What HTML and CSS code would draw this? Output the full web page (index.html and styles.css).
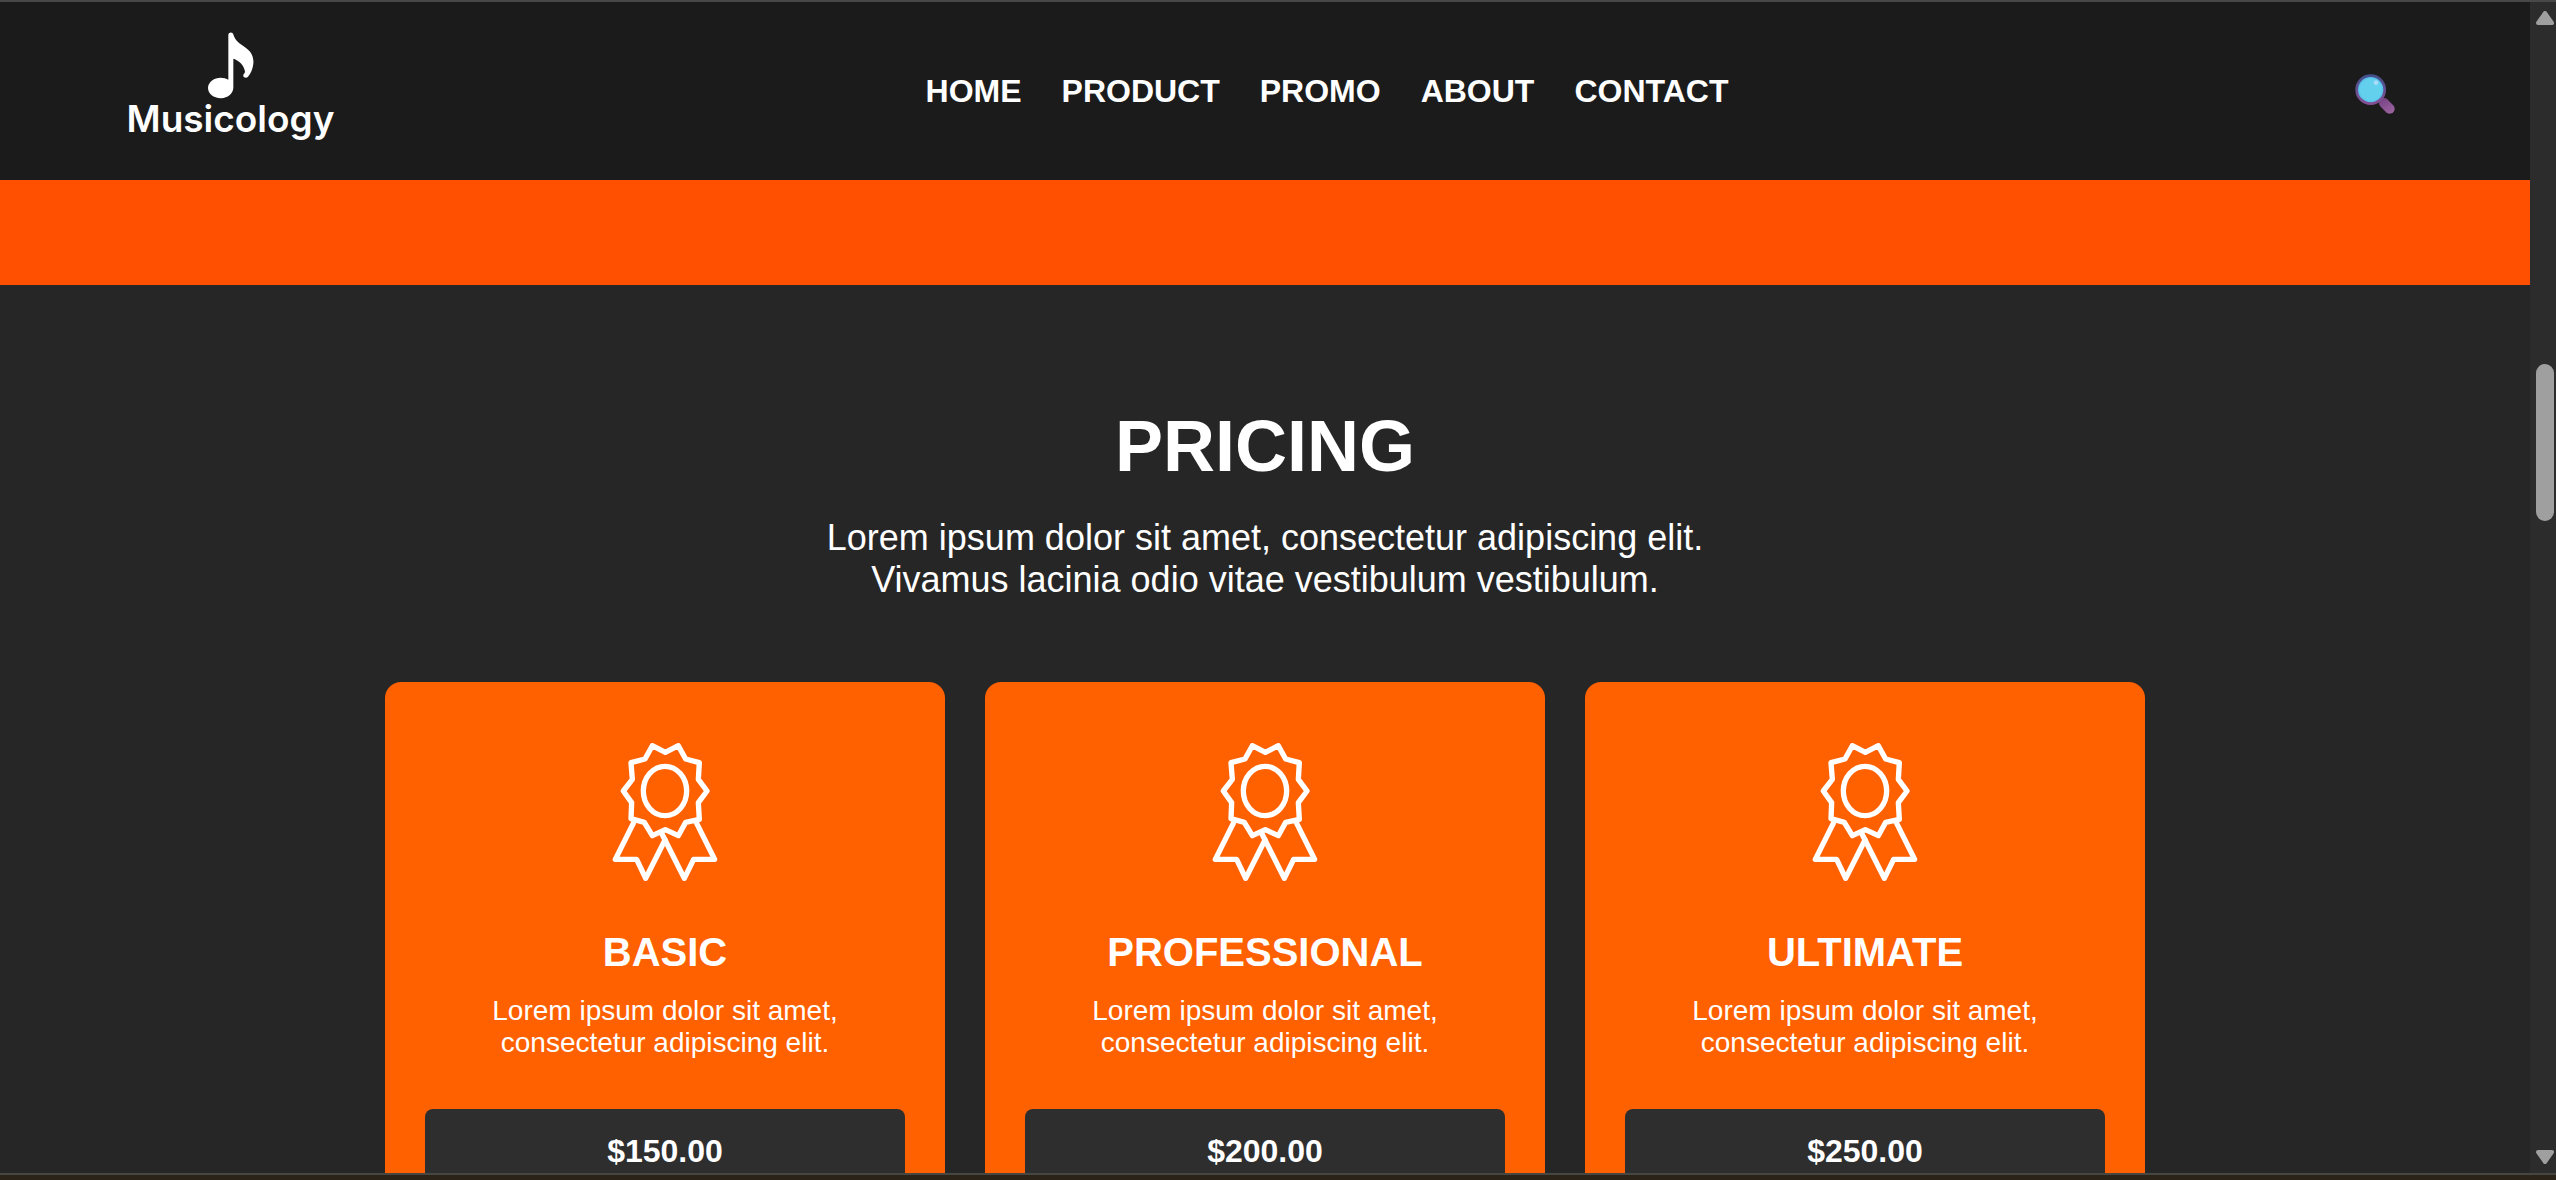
FILE: index.html
```html
<!DOCTYPE html>
<html lang="en">
<head>
<meta charset="utf-8">
<meta name="viewport" content="width=device-width, initial-scale=1">
<title>Musicology</title>
<link rel="stylesheet" href="styles.css">
</head>
<body>
<svg class="defs" aria-hidden="true">
  <symbol id="award" viewBox="-15 6 480 480">
    <g fill="none" stroke="#fff" stroke-width="16" stroke-linejoin="round" stroke-linecap="round">
      <path d="M187 77L226 97L265 77L287 117L328 128L325 178L351 213L325 248L328 298L287 307L265 347L226 329L187 347L163 307L123 296L125 248L100 213L127 178L123 128L165 117Z"/>
      <ellipse cx="225" cy="213" rx="65" ry="74"/>
      <path d="M131 308L76 418H140L167 475L225 360"/>
      <path d="M216 342L283 475L311 418H374L319 308"/>
    </g>
  </symbol>
</svg>
<div class="frame">
  <div class="page">
    <header class="header">
      <a class="logo" href="#">
        <svg class="logo-note" viewBox="323 95 138 200" aria-hidden="true">
          <path fill="#fff" d="M384 103C384 94 398 93 399 102C404 120 418 129 434 140C452 152 461 168 459 190C457 207 451 220 443 229C437 235 427 230 429 223C431 219 434 218 434 213C431 195 417 181 399 175V262C398 281 380 294 361 293C340 293 323 280 323 262C324 244 342 232 361 232C370 232 378 234 384 238Z"/>
        </svg>
        <span class="logo-name">Musicology</span>
      </a>
      <nav class="nav">
        <a href="#">HOME</a>
        <a href="#">PRODUCT</a>
        <a href="#">PROMO</a>
        <a href="#">ABOUT</a>
        <a href="#">CONTACT</a>
      </nav>
      <button class="search" type="button" aria-label="Search">
        <svg viewBox="108 72 120 120" aria-hidden="true">
          <defs>
            <linearGradient id="rim" x1="0" y1="0" x2="0" y2="1"><stop offset="0" stop-color="#43508c"/><stop offset="1" stop-color="#854f93"/></linearGradient>
            <radialGradient id="glass"><stop offset=".75" stop-color="#63d0ee"/><stop offset="1" stop-color="#4fb0e4"/></radialGradient>
            <linearGradient id="grip" gradientUnits="userSpaceOnUse" x1="190" y1="150" x2="215" y2="190"><stop offset="0" stop-color="#7a4587"/><stop offset="1" stop-color="#9b639f"/></linearGradient>
          </defs>
          <path d="M195 159L212 176" stroke="url(#grip)" stroke-width="30" stroke-linecap="round"/>
          <circle cx="155" cy="119" r="42" fill="url(#glass)" stroke="url(#rim)" stroke-width="8"/>
          <ellipse cx="171" cy="98" rx="7" ry="7" fill="#a9dcf8"/>
        </svg>
      </button>
    </header>
    <div class="band"></div>
    <main class="pricing">
      <h1>PRICING</h1>
      <p class="intro">Lorem ipsum dolor sit amet, consectetur adipiscing elit.<br>Vivamus lacinia odio vitae vestibulum vestibulum.</p>
      <div class="plans">
        <article class="plan">
          <svg class="plan-icon" aria-hidden="true"><use href="#award"/></svg>
          <h2>BASIC</h2>
          <p>Lorem ipsum dolor sit amet, consectetur adipiscing elit.</p>
          <div class="price">$150.00</div>
        </article>
        <article class="plan">
          <svg class="plan-icon" aria-hidden="true"><use href="#award"/></svg>
          <h2>PROFESSIONAL</h2>
          <p>Lorem ipsum dolor sit amet, consectetur adipiscing elit.</p>
          <div class="price">$200.00</div>
        </article>
        <article class="plan">
          <svg class="plan-icon" aria-hidden="true"><use href="#award"/></svg>
          <h2>ULTIMATE</h2>
          <p>Lorem ipsum dolor sit amet, consectetur adipiscing elit.</p>
          <div class="price">$250.00</div>
        </article>
      </div>
    </main>
  </div>
  <div class="scrollbar" aria-hidden="true">
    <svg class="arrow" viewBox="0 0 18 14"><path d="M9 2L16 12H2Z"/></svg>
    <div class="track"><div class="thumb"></div></div>
    <svg class="arrow" viewBox="0 0 18 14"><path d="M9 12L16 2H2Z"/></svg>
  </div>
</div>
</body>
</html>
```
FILE: styles.css
```css
* {
  box-sizing: border-box;
  margin: 0;
  padding: 0;
}

body {
  height: 100vh;
  padding-bottom: 5px;
  overflow: hidden;
  background: #2b2218;
  color: #fff;
  font-family: "Liberation Sans", Arial, sans-serif;
}

.defs {
  position: absolute;
  width: 0;
  height: 0;
}

.frame {
  display: flex;
  height: 100%;
  border-top: 2px solid #484848;
  border-bottom: 2px solid #484642;
  background: #262626;
}

.page {
  flex: 1;
  min-width: 0;
  overflow: hidden;
}

.header {
  display: flex;
  align-items: center;
  justify-content: space-between;
  height: 178px;
  padding: 0 5%;
  background: #1b1b1b;
}

.logo {
  display: flex;
  flex-direction: column;
  align-items: center;
  padding-bottom: 12px;
  color: #fff;
  text-decoration: none;
}

.logo-note {
  width: 46px;
  height: 67px;
}

.logo-name {
  font: 600 37px/40px Inter, sans-serif;
}

.nav {
  display: flex;
  gap: 40px;
}

.nav a {
  color: #fff;
  font-size: 32px;
  font-weight: bold;
  line-height: 36px;
  text-decoration: none;
}

.search {
  padding: 6px 8px 0 36px;
  border: 0;
  background: none;
  cursor: pointer;
}

.search svg {
  display: block;
  width: 40px;
  height: 40px;
}

.band {
  height: 105px;
  background: #ff4f00;
}

.pricing {
  padding: 120px 40px;
  text-align: center;
}

h1 {
  font-size: 72px;
  line-height: 82px;
}

.intro {
  margin: 30px 0 81px;
  font-size: 36px;
  line-height: 42px;
}

.plans {
  display: grid;
  grid-template-columns: repeat(3, 1fr);
  gap: 40px;
  max-width: 1760px;
  margin: 0 auto;
}

.plan {
  padding: 40px;
  border-radius: 16px;
  background: #ff6000;
}

.plan-icon {
  display: block;
  width: 160px;
  height: 160px;
  margin: 0 auto 47px;
}

.plan h2 {
  font-size: 40px;
  line-height: 46px;
}

.plan p {
  margin: 20px 40px 50px;
  font-size: 28px;
  line-height: 32px;
}

.price {
  padding: 24px;
  border-radius: 8px;
  background: #2e2e2e;
  font-size: 32px;
  font-weight: bold;
  line-height: 36px;
}

.scrollbar {
  display: flex;
  flex-direction: column;
  align-items: flex-end;
  width: 26px;
  padding: 9px 2px 9px 0;
  background: #2c2c2c;
}

.arrow {
  width: 18px;
  height: 14px;
  fill: #9f9f9f;
  stroke: #9f9f9f;
  stroke-width: 4px;
  stroke-linejoin: round;
}

.track {
  flex: 1;
  padding-top: 339px;
}

.thumb {
  width: 18px;
  height: 157px;
  border-radius: 9px;
  background: #9f9f9f;
}
```
